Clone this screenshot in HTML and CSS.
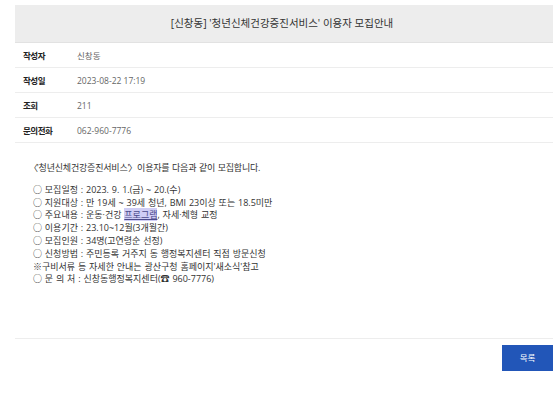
FILE: index.html
```html
<!DOCTYPE html>
<html lang="ko">

<head>
    <meta charset="UTF-8">
    <meta name="viewport" content="width=device-width, initial-scale=1.0">
    <title>게시판 상세</title>
    <link rel="stylesheet" href="styles.css">
</head>

<body>
    <div class="board">
        <div class="board-title">[신창동] '청년신체건강증진서비스' 이용자 모집안내</div>

        <div class="info-row">
            <span class="info-label">작성자</span>
            <span class="info-value">신창동</span>
        </div>
        <div class="info-row">
            <span class="info-label">작성일</span>
            <span class="info-value">2023-08-22 17:19</span>
        </div>
        <div class="info-row">
            <span class="info-label">조회</span>
            <span class="info-value">211</span>
        </div>
        <div class="info-row">
            <span class="info-label">문의전화</span>
            <span class="info-value">062-960-7776</span>
        </div>

        <div class="board-content">
            <p class="intro"><span class="open">〈</span>'청년신체건강증진서비스'<span class="close">〉</span>이용자를 다음과 같이 모집합니다.</p>
            <ul class="notice-list">
                <li>○ 모집일정 : 2023. 9. 1.(금) ~ 20.(수)</li>
                <li>○ 지원대상 : 만 19세 ~ 39세 청년, BMI 23이상 또는 18.5미만</li>
                <li>○ 주요내용 : 운동·건강 <a class="mark">프로그램</a>, 자세·체형 교정</li>
                <li>○ 이용기간 : 23.10~12월(3개월간)</li>
                <li>○ 모집인원 : 34명(고연령순 선정)</li>
                <li>○ 신청방법 : 주민등록 거주지 동 행정복지센터 직접 방문신청</li>
                <li>※구비서류 등 자세한 안내는 광산구청 홈페이지'새소식'참고</li>
                <li>○ 문 의 처 : 신창동행정복지센터(☎ 960-7776)</li>
            </ul>
        </div>

        <div class="board-foot">
            <a class="btn-list" href="#">목록</a>
        </div>
    </div>
</body>

</html>
```

FILE: styles.css
```css
body {
    font-family: "Open Sans", "Noto Sans CJK KR", sans-serif;
    margin: 0;
    padding: 5px 7px 0 15px;
    background: #fff;
    color: #333;
}

.board {
    width: 538px;
}

.board-title {
    height: 37px;
    line-height: 37px;
    background-color: #ededed;
    border-bottom: 1px solid #e2e2e2;
    text-align: center;
    font-size: 10.5px;
    color: #333;
    padding-right: 4px;
}

.info-row {
    display: flex;
    align-items: center;
    height: 24px;
    border-bottom: 1px solid #ededed;
    font-size: 8.5px;
}

.info-label {
    width: 54px;
    padding-left: 8px;
    color: #222;
    font-weight: 700;
    letter-spacing: -0.5px;
}

.info-value {
    color: #666;
}

.board-content {
    padding: 19px 20px 52px 17px;
    border-bottom: 1px solid #ededed;
    font-size: 9px;
    line-height: 12.8px;
    word-spacing: 0.5px;
}

.intro {
    margin: 0 0 9px;
    letter-spacing: -0.2px;
}

.intro .open {
    margin-left: -3px;
    margin-right: -1px;
}

.intro .close {
    margin-left: -1px;
}

.notice-list {
    list-style: none;
    margin: 0;
    padding: 0 0 0 1px;
}

.mark {
    background-color: #cfcdf5;
    color: #4a4a8a;
    text-decoration: underline;
}

.board-foot {
    display: flex;
    justify-content: flex-end;
    padding-top: 6px;
}

.btn-list {
    display: block;
    width: 51px;
    height: 26px;
    line-height: 26px;
    background-color: #2256b8;
    color: #fff;
    text-align: center;
    text-decoration: none;
    font-size: 8.5px;
}
```
